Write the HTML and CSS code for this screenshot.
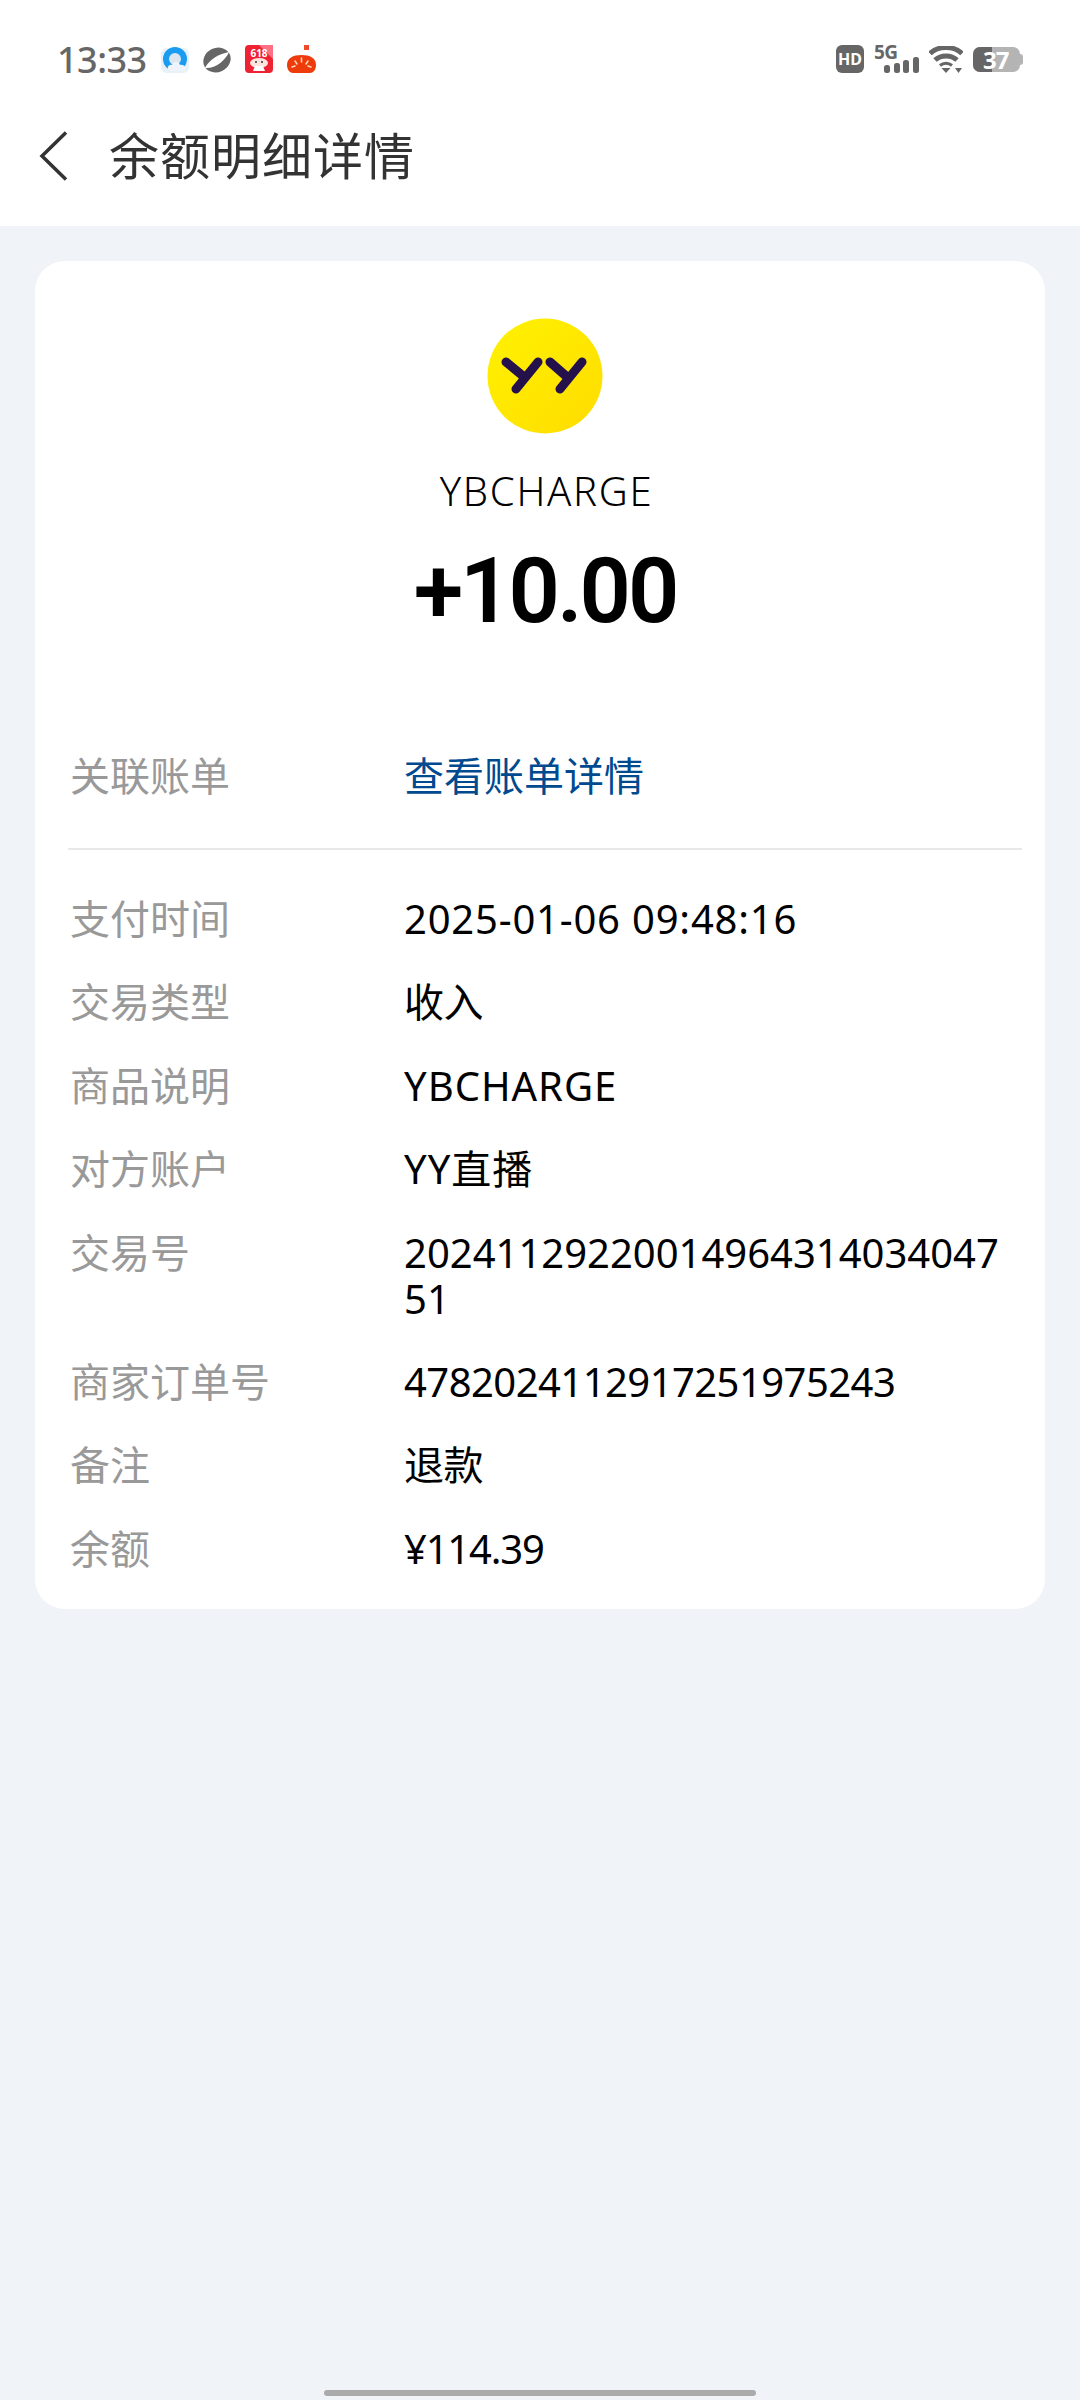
FILE: index.html
```html
<!DOCTYPE html>
<html lang="zh-CN">
<head>
<meta charset="UTF-8">
<meta name="viewport" content="width=device-width, initial-scale=1.0">
<title>余额明细详情</title>
<link rel="stylesheet" href="styles.css">
</head>
<body>
    <div class="top">
        <div class="status-bar">
            <span class="clock">13:33</span>
            <div class="app-icons">
                <svg width="28" height="28" viewBox="0 0 28 28">
                    <rect x="0" y="3" width="28" height="25" rx="6" fill="#e9f1f8"/>
                    <circle cx="14" cy="14" r="9" fill="#dbe6f0" stroke="#1a9cf0" stroke-width="6"/>
                    <path d="M9 26c-4-2-2-7 2-6 1-4 7-4 8 0 4-1 7 3 5 6z" fill="#eef4fa"/>
                </svg>
                <svg width="28" height="28" viewBox="0 0 28 28">
                    <ellipse cx="14" cy="15" rx="14" ry="12" transform="rotate(-25 14 15)" fill="#666"/>
                    <path d="M2 23C6 15 15 9 26 7 22 16 12 24 2 23z" fill="#fff"/>
                </svg>
                <svg width="28" height="28" viewBox="0 0 28 28">
                    <rect width="28" height="28" rx="4" fill="#ee2233"/>
                    <path d="M14 0h14v14z" fill="#ff6f86"/>
                    <text x="14" y="12" class="mini-text">618</text>
                    <ellipse cx="14" cy="18" rx="9" ry="5" fill="#ffe3de"/>
                    <path d="M8 26h12l-2-5h-8z" fill="#fff"/>
                    <circle cx="11" cy="17" r="1" fill="#333"/>
                    <circle cx="17" cy="17" r="1" fill="#333"/>
                </svg>
                <svg width="29" height="28" viewBox="0 0 29 28">
                    <rect x="17" y="0" width="5" height="5" fill="#ee4b2b"/>
                    <path d="M0 20C0 13 6 10 14.500 10S29 13 29 20c0 5-3 8-6 8H6c-3 0-6-3-6-8z" fill="#ee3b0c"/>
                    <path d="M14.500 13v4M8 16l2 3M21 16l-2 3M5 22l3-1M24 22l-3-1" stroke="#ffd9b8" stroke-width="1.500" stroke-linecap="round"/>
                </svg>
            </div>
            <div class="sys-icons">
                <span class="hd">HD</span>
                <div class="signal">
                    <span class="signal-label">5G</span>
                    <svg width="35" height="16" viewBox="0 0 35 16">
                        <rect x="0" y="8" width="6" height="8" rx="2.500" fill="#666"/>
                        <rect x="10" y="6" width="6" height="10" rx="2.500" fill="#666"/>
                        <rect x="19" y="3" width="6" height="13" rx="2.500" fill="#666"/>
                        <rect x="29" y="0" width="6" height="16" rx="2.500" fill="#666"/>
                    </svg>
                </div>
                <svg width="34" height="27" viewBox="0 0 34 27">
                    <path d="M1 7.500C9-.5 25-.5 33 7.500" fill="none" stroke="#666" stroke-width="5"/>
                    <path d="M6 14C12 8.500 22 8.500 28 14" fill="none" stroke="#666" stroke-width="5"/>
                    <path d="M12.500 22h9L17 27z" fill="#666"/>
                    <path d="M11 19.500c3.500-3 8.500-3 12 0" fill="none" stroke="#666" stroke-width="3"/>
                    <path d="M26 22h7l-3.500 5z" fill="#666"/>
                </svg>
                <div class="battery">
                    <span class="battery-level"></span>
                    <span class="battery-text">37</span>
                </div>
            </div>
        </div>
        <div class="nav-bar">
            <svg class="back" width="30" height="50" viewBox="0 0 30 50">
                <path d="M27 1.500L3 25l24 23.500" fill="none" stroke="#333" stroke-width="3.500"/>
            </svg>
            <h1>余额明细详情</h1>
        </div>
    </div>

    <div class="card">
        <div class="summary">
            <svg class="logo" width="116" height="116" viewBox="0 0 116 116">
                <defs>
                    <linearGradient id="yy" x1="0" y1="0" x2="1" y2="1">
                        <stop offset="0" stop-color="#fff200"/>
                        <stop offset="1" stop-color="#ffdc00"/>
                    </linearGradient>
                </defs>
                <circle cx="58" cy="58" r="57.500" fill="url(#yy)"/>
                <path d="M19 44l17 14M51 44L29 71M63 44l16 14M95 44L73 71" stroke="#24104a" stroke-width="9" stroke-linecap="round" fill="none"/>
            </svg>
            <div class="merchant">YBCHARGE</div>
            <div class="amount">+10.00</div>
        </div>

        <div class="row link-row">
            <div class="label">关联账单</div>
            <div class="value link">查看账单详情</div>
        </div>
        <div class="divider"></div>

        <div class="details">
            <div class="row">
                <div class="label">支付时间</div>
                <div class="value date">2025-01-06 09:48:16</div>
            </div>
            <div class="row">
                <div class="label">交易类型</div>
                <div class="value">收入</div>
            </div>
            <div class="row">
                <div class="label">商品说明</div>
                <div class="value wide">YBCHARGE</div>
            </div>
            <div class="row">
                <div class="label">对方账户</div>
                <div class="value wide">YY直播</div>
            </div>
            <div class="row">
                <div class="label">交易号</div>
                <div class="value trade-no">2024112922001496431403404751</div>
            </div>
            <div class="row">
                <div class="label">商家订单号</div>
                <div class="value">4782024112917251975243</div>
            </div>
            <div class="row">
                <div class="label">备注</div>
                <div class="value">退款</div>
            </div>
            <div class="row">
                <div class="label">余额</div>
                <div class="value balance">¥114.39</div>
            </div>
        </div>
    </div>

    <div class="home-bar"></div>
</body>
</html>
```

FILE: styles.css
```css
* {
    box-sizing: border-box;
}
html, body {
    margin: 0;
    padding: 0;
}
body {
    width: 1080px;
    height: 2400px;
    position: relative;
    overflow: hidden;
    background-color: #f0f3f8;
    font-family: "Noto Sans", "Noto Sans CJK SC", sans-serif;
    color: #000;
}
.top {
    background-color: #fff;
    height: 226px;
}
.status-bar {
    height: 118px;
    padding: 24px 56px 24px 57px;
    display: flex;
    align-items: center;
}
.clock {
    font-size: 36px;
    font-weight: 500;
    letter-spacing: -0.5px;
    color: #666;
    width: 104px;
}
.app-icons {
    display: flex;
    gap: 14px;
    align-items: center;
}
.mini-text {
    font-family: "Noto Sans", sans-serif;
    font-size: 10px;
    font-weight: 700;
    fill: #fff;
    text-anchor: middle;
}
.sys-icons {
    margin-left: auto;
    display: flex;
    align-items: center;
    gap: 10px;
}
.hd {
    width: 28px;
    height: 28px;
    border-radius: 6px;
    background-color: #666;
    color: #fff;
    font-size: 16px;
    font-weight: 700;
    text-align: center;
    line-height: 28px;
}
.signal {
    width: 45px;
    height: 28px;
    position: relative;
}
.signal-label {
    position: absolute;
    left: 0;
    top: -6px;
    font-size: 19px;
    line-height: 26px;
    font-weight: 700;
    letter-spacing: -0.5px;
    color: #666;
}
.signal svg {
    position: absolute;
    right: 0;
    bottom: 0;
}
.battery {
    width: 47px;
    height: 25px;
    margin-right: 4px;
    border-radius: 7px;
    background-color: #b4b4b4;
    position: relative;
}
.battery::after {
    content: "";
    position: absolute;
    left: 47px;
    top: 7px;
    width: 3px;
    height: 11px;
    border-radius: 0 3px 3px 0;
    background-color: #b4b4b4;
}
.battery-level {
    display: block;
    width: 19px;
    height: 25px;
    border-radius: 7px 0 0 7px;
    background-color: #666;
}
.battery-text {
    position: absolute;
    left: 10px;
    top: 0;
    font-size: 24px;
    font-weight: 700;
    line-height: 25px;
    letter-spacing: -1px;
    color: #fff;
}
.nav-bar {
    display: flex;
    align-items: center;
    padding-left: 39px;
    height: 76px;
}
.nav-bar h1 {
    margin: -6px 0 0 40px;
    font-size: 50px;
    font-weight: 400;
    letter-spacing: 1px;
    color: #333;
}
.card {
    margin: 35px 35px 0;
    background-color: #fff;
    border-radius: 30px;
    height: 1348px;
    padding: 57px 23px 0 33px;
}
.summary {
    display: flex;
    flex-direction: column;
    align-items: center;
    height: 435px;
}
.logo {
    display: block;
}
.merchant {
    margin-top: 30px;
    padding-left: 3px;
    font-size: 40px;
    line-height: 54px;
    font-weight: 300;
    letter-spacing: 1.7px;
}
.amount {
    margin-top: 22px;
    font-family: Roboto, sans-serif;
    font-size: 90px;
    line-height: 104px;
    font-weight: 600;
    letter-spacing: -3px;
}
.row {
    display: grid;
    grid-template-columns: 336px 1fr;
    font-size: 40px;
    line-height: 46px;
    margin-bottom: 37.4px;
}
.link-row {
    margin-bottom: 0;
}
.label {
    padding-left: 2px;
    color: #999;
}
.value {
    word-break: break-all;
    letter-spacing: -0.55px;
}
.link {
    color: #004a8f;
    letter-spacing: 0;
}
.date {
    letter-spacing: 0.8px;
}
.wide {
    letter-spacing: 1px;
}
.trade-no {
    letter-spacing: 0;
    padding-right: 10px;
}
.balance {
    letter-spacing: -1.2px;
}
.divider {
    height: 2px;
    background-color: #e8e8e8;
    margin: 49px 0 46px 0;
}
.home-bar {
    position: absolute;
    left: 324px;
    bottom: 4px;
    width: 432px;
    height: 6px;
    border-radius: 3px;
    background-color: #aaa;
}
```
